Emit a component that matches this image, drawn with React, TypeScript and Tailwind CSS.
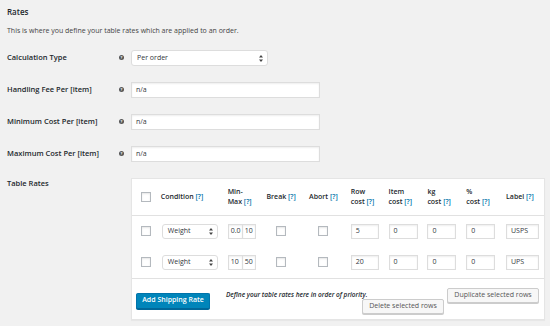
import type { ReactNode } from "react";

const FONT = "font-['Open_Sans','Liberation_Sans',sans-serif]";
const INPUT = "h-[16px] bg-white border border-[#ddd] shadow-[inset_0_1px_2px_rgba(0,0,0,0.07)] text-[7px] text-[#32373c] flex items-center pl-[4px]";
const BTN = "h-[15px] px-[5px] bg-[#f7f7f7] border border-[#ccc] rounded-[2px] shadow-[0_1px_0_#ccc] text-[7px] text-[#555] flex items-center whitespace-nowrap";
const CHECK = "w-[10px] h-[10px] bg-white border border-[#b4b9be] shadow-[inset_0_1px_2px_rgba(0,0,0,0.1)]";

function Arrows() {
  return (
    <svg width="4" height="7" viewBox="0 0 4 7" className="shrink-0">
      <path d="M2 0 L4 2.6 L0 2.6 Z M2 7 L4 4.4 L0 4.4 Z" fill="#444" />
    </svg>
  );
}

function Help() {
  return (
    <span className="w-[5px] h-[5px] rounded-full bg-[#555] text-white text-[4px] leading-[5px] font-bold flex items-center justify-center shrink-0">?</span>
  );
}

function Q() {
  return <span className="text-[#0073aa]">[?]</span>;
}

function Field({ label, children }: { label: string; children: ReactNode }) {
  return (
    <div className="flex items-center h-[16px]">
      <div className="w-[112px] text-[7.5px] font-semibold text-[#23282d] whitespace-nowrap">{label}</div>
      <div className="-mt-[2px]"><Help /></div>
      <div className="ml-[7px]">{children}</div>
    </div>
  );
}

const rows = [
  { min: "0.0", max: "10", cost: "5", label: "USPS" },
  { min: "10", max: "50", cost: "20", label: "UPS" },
];

export default function App() {
  return (
    <div className={`w-[550px] h-[326px] bg-[#f1f1f1] overflow-hidden text-[#444] ${FONT}`}>
      <div className="pl-[7px] pt-[7px]">
        <h2 className="text-[8px] leading-[10px] font-semibold text-[#23282d]">Rates</h2>
        <p className="mt-[9px] text-[7px] leading-[10px]">This is where you define your table rates which are applied to an order.</p>

        <div className="mt-[14px] flex flex-col gap-[16px]">
          <Field label="Calculation Type">
            <div className="w-[137px] h-[16px] bg-white border border-[#ddd] rounded-[3px] flex items-center justify-between pl-[5px] pr-[4px] text-[7px] text-[#32373c]">
              <span>Per order</span>
              <Arrows />
            </div>
          </Field>
          <Field label="Handling Fee Per [item]">
            <div className={`${INPUT} w-[189px] text-[#999]`}>n/a</div>
          </Field>
          <Field label="Minimum Cost Per [item]">
            <div className={`${INPUT} w-[189px] text-[#999]`}>n/a</div>
          </Field>
          <Field label="Maximum Cost Per [item]">
            <div className={`${INPUT} w-[189px] text-[#999]`}>n/a</div>
          </Field>
        </div>

        <div className="mt-[16px] flex items-start">
          <div className="w-[124px] pt-[0px] text-[7.5px] leading-[10px] font-semibold text-[#23282d]">Table Rates</div>
          <div className="w-[414px] h-[142px] bg-white border border-[#e5e5e5] shadow-[0_1px_1px_rgba(0,0,0,0.04)] flex flex-col">
            <table className="table-fixed border-collapse text-[7px] text-[#23282d]">
              <colgroup>
                <col className="w-[29px]" />
                <col className="w-[67px]" />
                <col className="w-[39px]" />
                <col className="w-[43px]" />
                <col className="w-[42px]" />
                <col className="w-[38px]" />
                <col className="w-[39px]" />
                <col className="w-[39px]" />
                <col className="w-[40px]" />
                <col className="w-[38px]" />
              </colgroup>
              <thead>
                <tr className="h-[36px] border-b border-[#e1e1e1] text-left font-semibold leading-[10px]">
                  <th className="p-0"><div className={`${CHECK} ml-[9px]`} /></th>
                  <th className="p-0 font-semibold">Condition <Q /></th>
                  <th className="p-0 font-semibold">Min-<br />Max <Q /></th>
                  <th className="p-0 font-semibold">Break <Q /></th>
                  <th className="p-0 font-semibold">Abort <Q /></th>
                  <th className="p-0 font-semibold">Row<br />cost <Q /></th>
                  <th className="p-0 font-semibold">Item<br />cost <Q /></th>
                  <th className="p-0 font-semibold">kg<br />cost <Q /></th>
                  <th className="p-0 font-semibold">%<br />cost <Q /></th>
                  <th className="p-0 font-semibold whitespace-nowrap">Label <Q /></th>
                </tr>
              </thead>
              <tbody>
                {rows.map((r, i) => (
                  <tr key={i} className={i === 0 ? "h-[32px]" : "h-[31px] border-b border-[#e1e1e1]"}>
                    <td className="p-0"><div className={`${CHECK} ml-[9px]`} /></td>
                    <td className="p-0">
                      <div className="ml-[1px] w-[56px] h-[15px] bg-white border border-[#ddd] rounded-[3px] flex items-center justify-between pl-[5px] pr-[4px] text-[#32373c]">
                        <span>Weight</span>
                        <Arrows />
                      </div>
                    </td>
                    <td className="p-0">
                      <div className="flex">
                        <div className={`${INPUT} !h-[15px] w-[15px] !pl-[2px] overflow-hidden whitespace-nowrap`}>{r.min}</div>
                        <div className={`${INPUT} !h-[15px] w-[14px] !pl-[2px] -ml-[1px] overflow-hidden`}>{r.max}</div>
                      </div>
                    </td>
                    <td className="p-0"><div className={`${CHECK} ml-[10px]`} /></td>
                    <td className="p-0"><div className={`${CHECK} ml-[9px]`} /></td>
                    <td className="p-0"><div className={`${INPUT} !h-[15px] w-[28px]`}>{r.cost}</div></td>
                    <td className="p-0"><div className={`${INPUT} !h-[15px] w-[29px]`}>0</div></td>
                    <td className="p-0"><div className={`${INPUT} !h-[15px] w-[29px]`}>0</div></td>
                    <td className="p-0"><div className={`${INPUT} !h-[15px] w-[29px]`}>0</div></td>
                    <td className="p-0"><div className={`${INPUT} !h-[15px] w-[33px]`}>{r.label}</div></td>
                  </tr>
                ))}
              </tbody>
            </table>

            <div className="flex items-start">
              <button className="ml-[4px] mt-[14px] h-[16px] w-[74px] bg-[#0085ba] border border-[#0073aa] border-b-[#006799] rounded-[2px] shadow-[0_1px_0_#006799] text-white text-[7px] font-semibold flex items-center justify-center whitespace-nowrap">
                Add Shipping Rate
              </button>
              <div className="ml-[16px] mt-[11px] w-[136px] whitespace-nowrap text-[6.5px] leading-[9px] italic font-semibold text-[#23282d]">
                Define your table rates here in order of priority.
              </div>
              <button className={`${BTN} mt-[20px] w-[82px] justify-center`}>Delete selected rows</button>
              <button className={`${BTN} mt-[9px] ml-[3px] w-[92px] justify-center`}>Duplicate selected rows</button>
            </div>
          </div>
        </div>
      </div>
    </div>
  );
}
